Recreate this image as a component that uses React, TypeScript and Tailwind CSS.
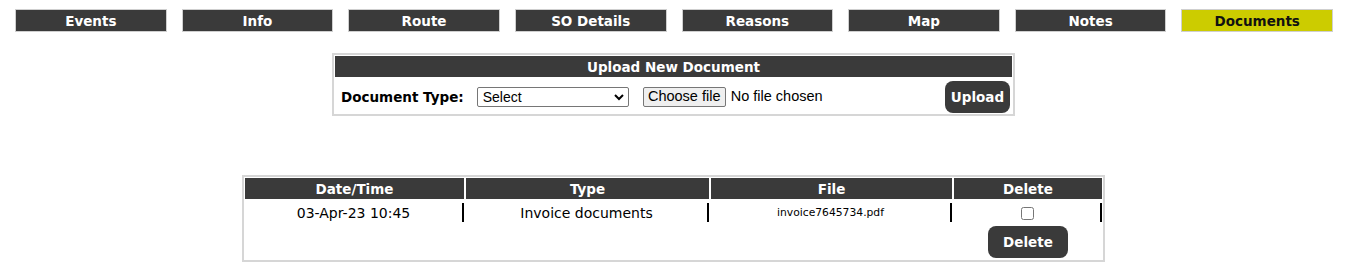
import React from "react";

const tabs = ["Events", "Info", "Route", "SO Details", "Reasons", "Map", "Notes", "Documents"];

const columns = ["Date/Time", "Type", "File", "Delete"];

export default function App() {
  const active = "Documents";

  return (
    <div className="w-[1353px] h-[276px] bg-white text-black font-['DejaVu_Sans',Verdana,sans-serif]">
      {/* tab bar */}
      <div className="grid grid-cols-8 gap-[15px] pt-[9px] pl-[15px] pr-[20px]">
        {tabs.map((t) => (
          <div
            key={t}
            className={
              t === active
                ? "h-[23px] pt-px flex items-center justify-center border border-[#cfcfcf] bg-[#cccc00] text-[#111] text-[13.5px] font-bold"
                : "h-[23px] pt-px flex items-center justify-center border border-[#cfcfcf] bg-[#3a3a3a] text-white text-[13.5px] font-bold"
            }
          >
            {t}
          </div>
        ))}
      </div>

      {/* upload box */}
      <div className="ml-[332px] mt-[21px] w-[683px] border-2 border-[#d6d6d6] p-px">
        <div className="h-[21px] pt-px bg-[#3a3a3a] text-white text-[13.5px] font-bold flex items-center justify-center">
          Upload New Document
        </div>
        <div className="flex items-center pl-[6px] pr-[2px] pt-[4px]">
          <span className="text-[13.5px] font-bold">Document Type:</span>
          <div className="relative ml-[13px] w-[152px] h-[20px]">
            <select className="block appearance-none w-full h-full border border-[#767676] rounded-[2px] bg-white pl-[5px] py-0 leading-[18px] text-[14px] font-['Liberation_Sans',Arial,sans-serif] text-black">
              <option>Select</option>
              <option>Invoice documents</option>
            </select>
            <svg
              className="absolute right-[5px] top-[6px] pointer-events-none"
              width="10"
              height="8"
              viewBox="0 0 10 8"
            >
              <path d="M1 2 L5 6 L9 2" fill="none" stroke="#000" strokeWidth="2" />
            </svg>
          </div>
          <label className="ml-[14px] flex items-center text-[14.5px] font-['Liberation_Sans',Arial,sans-serif]">
            <span className="h-[20px] w-[83px] flex items-center justify-center border border-[#767676] rounded-[2px] bg-[#efefef]">
              Choose file
            </span>
            <span className="ml-[5px]">No file chosen</span>
          </label>
          <button className="ml-auto h-[32px] w-[65px] pt-px rounded-[8px] bg-[#3a3a3a] text-white text-[13.5px] font-bold">
            Upload
          </button>
        </div>
      </div>

      {/* documents table */}
      <div className="ml-[242px] mt-[59px] w-[863px] border-2 border-[#d6d6d6] p-px">
        <div className="grid grid-cols-[219px_243px_241px_148px] gap-x-[2px]">
          {columns.map((c) => (
            <div
              key={c}
              className="h-[21px] pt-px bg-[#3a3a3a] text-white text-[13.5px] font-bold flex items-center justify-center"
            >
              {c}
            </div>
          ))}
          <div className="mt-[4px] h-[19px] pt-[2px] border-r-2 border-black flex items-center justify-center text-[14px]">
            03-Apr-23 10:45
          </div>
          <div className="mt-[4px] h-[19px] pt-[2px] border-r-2 border-black flex items-center justify-center text-[14px]">
            Invoice documents
          </div>
          <div className="mt-[4px] h-[19px] pt-[2px] border-r-2 border-black flex items-center justify-center text-[10.75px]">
            invoice7645734.pdf
          </div>
          <div className="mt-[4px] h-[19px] pt-px border-r-2 border-black flex items-center justify-center">
            <input type="checkbox" className="w-[13px] h-[13px] m-0" />
          </div>
          <div className="col-span-3" />
          <div className="flex justify-center pt-[4px] pb-[1px]">
            <button className="h-[32px] w-[80px] pt-px rounded-[8px] bg-[#3a3a3a] text-white text-[13.5px] font-bold">
              Delete
            </button>
          </div>
        </div>
      </div>
    </div>
  );
}
